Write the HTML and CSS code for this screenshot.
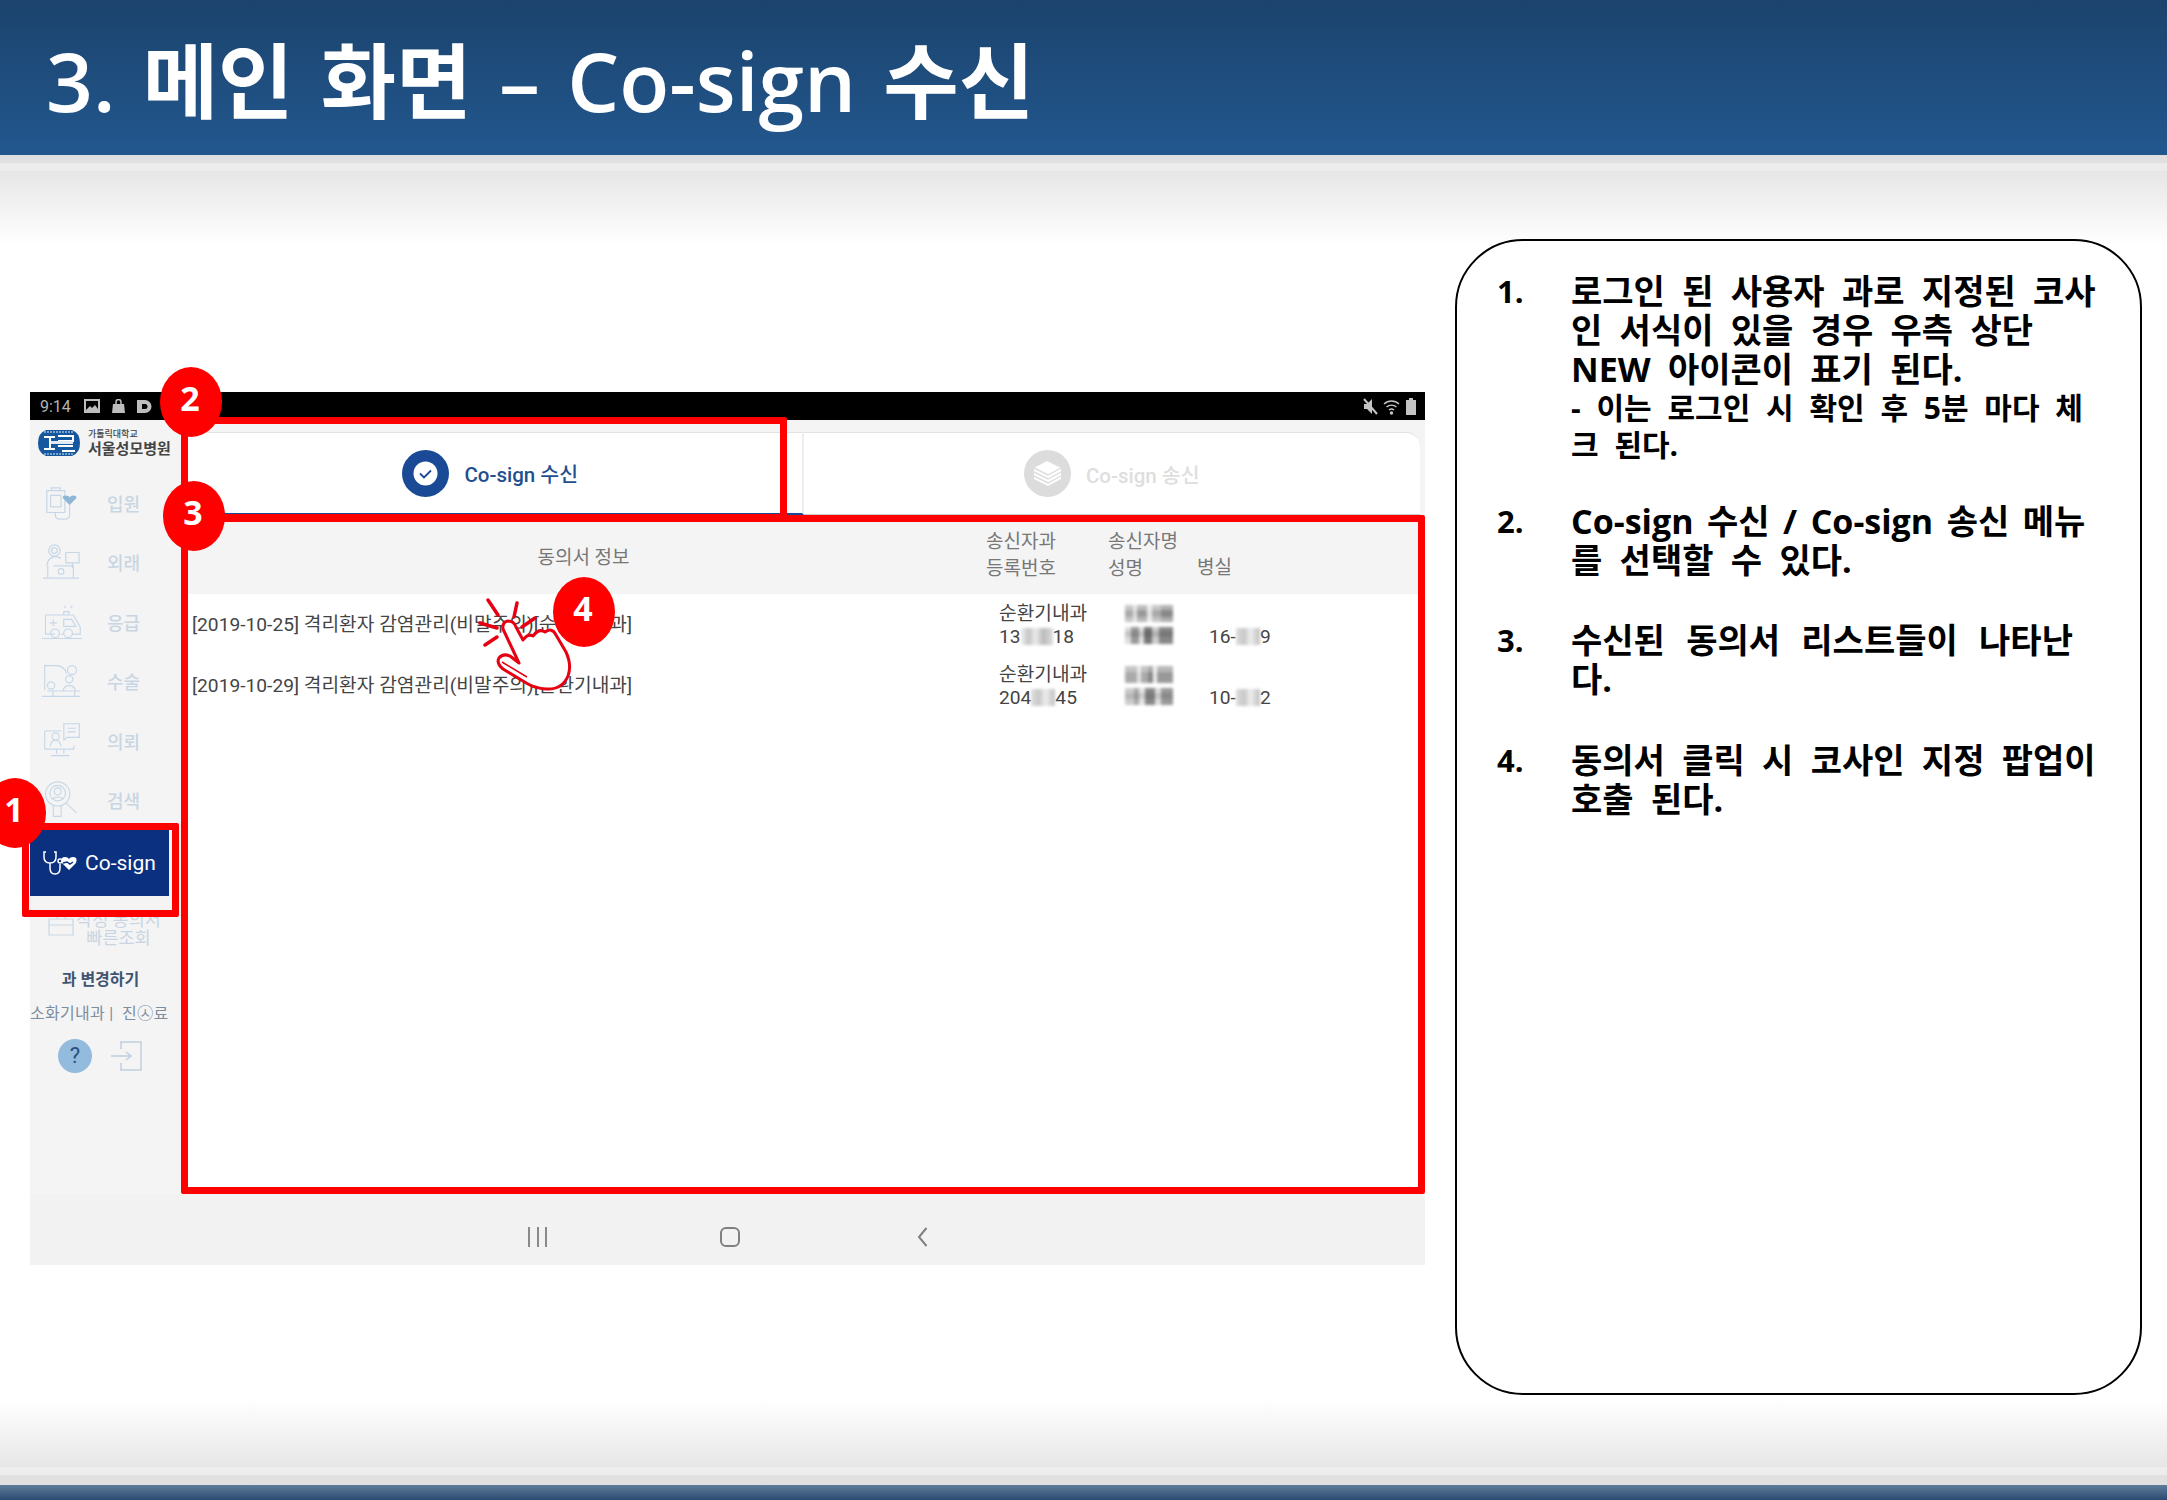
FILE: index.html
```html
<!DOCTYPE html>
<html lang="ko">
<head>
    <meta charset="UTF-8">
    <meta name="viewport" content="width=device-width, initial-scale=1.0">
    <title>3. 메인 화면 – Co-sign 수신</title>
    <link rel="stylesheet" href="styles.css">
</head>
<body>
    <header class="slide-header">
        <h1 class="slide-title">3. 메인 화면 – Co-sign 수신</h1>
    </header>

    <main class="slide-body">
        <div class="phone">
            <div class="status-bar">
                <div class="status-left">
                    <span class="status-time">9:14</span>
                    <svg class="status-icon" width="16" height="14" viewBox="0 0 16 14"><path fill="#bdbdbd" d="M0 0h16v14H0z"/><path fill="#000" d="M2 2h12v8l-3-4-3 3-2-2-4 4z"/></svg>
                    <svg class="status-icon" width="13" height="14" viewBox="0 0 13 14"><path fill="#bdbdbd" d="M1 5h11l1 9H0z"/><path fill="none" stroke="#bdbdbd" stroke-width="1.5" d="M4 5V3a2.500 2.500 0 0 1 5 0v2"/></svg>
                    <svg class="status-icon" width="15" height="13" viewBox="0 0 15 13"><path fill="#bdbdbd" fill-rule="evenodd" d="M0 0h8a6.500 6.500 0 0 1 0 13H0zM5 4v5h3a2.500 2.500 0 0 0 0-5z"/></svg>
                </div>
                <div class="status-right">
                    <svg width="15" height="17" viewBox="0 0 15 17"><path fill="#c4c4c4" d="M1 6h3l5-5v15L4 11H1z"/><path stroke="#c4c4c4" stroke-width="2" d="M1 1l13 15"/></svg>
                    <svg width="18" height="17" viewBox="0 0 18 17" fill="none" stroke="#c4c4c4" stroke-width="1.400"><path d="M1 6a11 11 0 0 1 15 0M3.500 9a7.500 7.500 0 0 1 10 0M6 12a4 4 0 0 1 5 0"/><circle cx="8.500" cy="15" r="1" fill="#c4c4c4"/></svg>
                    <svg width="10" height="17" viewBox="0 0 10 17"><path fill="#c4c4c4" d="M3 0h4v2h3v15H0V2h3z"/></svg>
                </div>
            </div>

            <div class="phone-main">
                <nav class="sidebar">
                    <div class="brand">
                        <svg width="44" height="28" viewBox="0 0 44 28">
                            <path fill="#15589f" d="M9 1h26q8 3 8 13t-8 13H9q-8-3-8-13T9 1z"/>
                            <path fill="none" stroke="#dfeaf5" stroke-width="1" stroke-dasharray="2 1" d="M7 3h30M7 25h30"/>
                            <path fill="none" stroke="#fff" stroke-width="2" d="M7 8h11M13 8v13M7 20h11M21 7h15v5H21M21 17h15M25 22h13"/>
                            <path fill="#dfeaf5" d="M14 12h22v3H14z"/>
                        </svg>
                        <div class="brand-text">
                            <span class="brand-small">가톨릭대학교</span>
                            <span class="brand-name">서울성모병원</span>
                        </div>
                    </div>

                    <a class="menu-item">
                        <svg class="menu-icon" viewBox="0 0 40 40">
                            <path d="M4 7h19v23H4zM9 4h9v3H9zM8 12h11v12H8zM13 30v3q0 4 5 4h5q5 0 5-4V20"/>
                            <path class="icon-fill" d="M28 22l-7-7q-1-3 3-3 3 0 4 2 1-2 4-2 4 0 3 3z"/>
                        </svg>
                        <span class="menu-label">입원</span>
                    </a>
                    <a class="menu-item">
                        <svg class="menu-icon" viewBox="0 0 40 40">
                            <circle cx="12" cy="8" r="6"/><circle cx="12" cy="8" r="3"/>
                            <path d="M4 24q1-9 9-10l6 2M5 24v12M24 10h14v11H24zM31 21v5M11 24h21v12M0 37h38"/>
                            <circle cx="19" cy="30" r="3"/>
                        </svg>
                        <span class="menu-label">외래</span>
                    </a>
                    <a class="menu-item">
                        <svg class="menu-icon" viewBox="0 0 46 40">
                            <path d="M4 12h20l12 0 8 14v8H35M15 34H4V12M25 34h-3M25 17h9l5 8H25zM9 21h8M13 17v8M25 12V8h6v4M27 4l-1-3M33 4l2-3M0 39h46"/>
                            <circle cx="15" cy="33" r="5"/><circle cx="30" cy="33" r="5"/>
                        </svg>
                        <span class="menu-label">응급</span>
                    </a>
                    <a class="menu-item">
                        <svg class="menu-icon" viewBox="0 0 44 40">
                            <path d="M3 2v28M3 3h12q10 0 12 9M0 37h42M6 31h36M12 31v6M36 31v6M23 31q1-6 7-6t7 6"/>
                            <circle cx="10" cy="25" r="4"/><circle cx="30" cy="18" r="4"/><circle cx="33" cy="8" r="5"/>
                        </svg>
                        <span class="menu-label">수술</span>
                    </a>
                    <a class="menu-item">
                        <svg class="menu-icon" viewBox="0 0 44 40">
                            <path d="M3 9h18v0M3 9v20h32v-4M16 29v5M24 29v5M10 36h20M24 1h17v15H28l-4 3zM28 6h9M28 10h9M9 26q1-7 6-7t6 7"/>
                            <circle cx="15" cy="15" r="4"/>
                        </svg>
                        <span class="menu-label">의뢰</span>
                    </a>
                    <a class="menu-item">
                        <svg class="menu-icon" viewBox="0 0 40 44">
                            <circle cx="15" cy="15" r="14"/><circle cx="15" cy="14" r="9"/><circle cx="15" cy="12" r="4"/>
                            <path d="M25 26l12 11M10 28v13h9V28M8 21q7-5 14 0"/>
                        </svg>
                        <span class="menu-label">검색</span>
                    </a>

                    <a class="menu-active">
                        <svg width="34" height="26" viewBox="0 0 34 26" fill="none" stroke="#fff" stroke-width="1.500">
                            <path d="M3 2H1v5q0 6 6 6t6-6V2h-2M7 13v5q0 6 5 6t5-6v-4"/>
                            <circle cx="17" cy="11" r="2"/>
                            <path fill="#fff" stroke="none" d="M26 20l-7-7q-2-6 3-6 3 0 4 2 1-2 4-2 5 0 3 6z"/>
                            <path stroke="#0b3080" d="M20 13l4-1 3 2 3-2"/>
                        </svg>
                        <span>Co-sign</span>
                    </a>

                    <div class="quick-view">
                        <svg class="quick-icon" width="26" height="22" viewBox="0 0 26 22" fill="none" stroke="#c9d7e3" stroke-width="1.200"><path d="M1 5h24v16H1zM1 11h24M9 5V1h8v4"/></svg>
                        <span class="quick-label">작성 동의서<br>빠른조회</span>
                    </div>
                    <div class="dept-change">과 변경하기</div>
                    <div class="dept-name">소화기내과&nbsp;|&nbsp; 진㉦료</div>
                    <div class="side-actions">
                        <span class="help-btn">?</span>
                        <svg width="32" height="30" viewBox="0 0 32 30" fill="none" stroke="#bfd0de" stroke-width="1.500"><path d="M10 8V1h20v28H10v-7M0 15h20M15 11l5 4-5 4"/></svg>
                    </div>
                </nav>

                <section class="content">
                    <div class="tabs">
                        <div class="tab tab-on">
                            <svg width="47" height="47" viewBox="0 0 47 47">
                                <circle cx="23.500" cy="23.500" r="23.500" fill="#1a4a96"/>
                                <circle cx="23.500" cy="23.500" r="12" fill="#fff"/>
                                <path fill="none" stroke="#1a4a96" stroke-width="1.800" d="M18 23.500l4 4 7-7"/>
                            </svg>
                            <span>Co-sign 수신</span>
                        </div>
                        <div class="tab tab-off">
                            <svg width="47" height="47" viewBox="0 0 47 47">
                                <circle cx="23.500" cy="23.500" r="23.500" fill="#dcdcdc"/>
                                <path fill="#fff" d="M23 11l14 7v11l-13 7-14-7V18z"/>
                                <path fill="none" stroke="#dcdcdc" stroke-width="1.400" d="M10 18l14 7 13-7M10 22l14 7 13-7M10 26l14 7 13-7"/>
                            </svg>
                            <span>Co-sign 송신</span>
                        </div>
                    </div>

                    <div class="table-head">
                        <div class="head-info">동의서 정보</div>
                        <div>송신자과<br>등록번호</div>
                        <div>송신자명<br>성명</div>
                        <div class="cell-low">병실</div>
                    </div>

                    <div class="table-row">
                        <div class="row-title">[2019-10-25] 격리환자 감염관리(비말주의)[순환기내과]</div>
                        <div>순환기내과<br>13<span class="blur-num blur-3"></span>18</div>
                        <div class="blur-name">
                            <span class="blur-block b-c"></span>
                            <span class="blur-block b-d"></span>
                        </div>
                        <div class="cell-low">16-<span class="blur-num blur-2"></span>9</div>
                    </div>
                    <div class="table-row">
                        <div class="row-title">[2019-10-29] 격리환자 감염관리(비말주의)[순환기내과]</div>
                        <div>순환기내과<br>204<span class="blur-num blur-2"></span>45</div>
                        <div class="blur-name">
                            <span class="blur-block b-e"></span>
                            <span class="blur-block b-f"></span>
                        </div>
                        <div class="cell-low">10-<span class="blur-num blur-2"></span>2</div>
                    </div>
                </section>
            </div>

            <div class="nav-bar">
                <span class="nav-recent"><i></i><i></i><i></i></span>
                <span class="nav-home"></span>
                <svg class="nav-back" width="11" height="20" viewBox="0 0 11 20"><path fill="none" stroke="#808080" stroke-width="2" d="M9.500 1L2 10l7.500 9"/></svg>
            </div>

            <!-- red marks drawn over the screenshot -->
            <div class="mark mark-menu"></div>
            <div class="mark mark-tab"></div>
            <div class="mark mark-list"></div>
            <svg class="hand" width="110" height="100" viewBox="470 595 110 100">
                <g fill="none" stroke="#e60012" stroke-width="3.500" stroke-linecap="round">
                    <path d="M488 600l10 15M517 603l-3 14M535 618l-13 9M480 623l17 5M485 645l12-8"/>
                </g>
                <path fill="#fff" stroke="#e60012" stroke-width="3" stroke-linejoin="round" d="M503 629q-1-7 5-8 6 0 8 6l7 13q5-7 10-4 6-8 12-4 7-5 11 3l10 17q6 13 2 24-6 14-22 13-11-1-18-5l-25-15q-7-6-4-11 4-5 11-2l9 7z"/>
                <path fill="none" stroke="#e60012" stroke-width="1.500" d="M502 662l25 15"/>
            </svg>
            <span class="badge badge-1">1</span>
            <span class="badge badge-2">2</span>
            <span class="badge badge-3">3</span>
            <span class="badge badge-4">4</span>
        </div>

        <aside class="notes">
            <ol class="note-list">
                <li class="note note-first">
                    <span class="note-num">1.</span>
                    <div>
                        <span class="note-line">로그인 된 사용자 과로 지정된 코사</span>
                        <span class="note-line">인 서식이 있을 경우 우측 상단</span>
                        <span class="note-line">NEW 아이콘이 표기 된다.</span>
                        <span class="note-line note-sub">- 이는 로그인 시 확인 후 5분 마다 체</span>
                        <span class="note-line note-sub">크 된다.</span>
                    </div>
                </li>
                <li class="note">
                    <span class="note-num">2.</span>
                    <div>
                        <span class="note-line note-tight">Co-sign 수신 / Co-sign 송신 메뉴</span>
                        <span class="note-line">를 선택할 수 있다.</span>
                    </div>
                </li>
                <li class="note">
                    <span class="note-num">3.</span>
                    <div>
                        <span class="note-line note-wide">수신된 동의서 리스트들이 나타난</span>
                        <span class="note-line">다.</span>
                    </div>
                </li>
                <li class="note">
                    <span class="note-num">4.</span>
                    <div>
                        <span class="note-line">동의서 클릭 시 코사인 지정 팝업이</span>
                        <span class="note-line">호출 된다.</span>
                    </div>
                </li>
            </ol>
        </aside>
    </main>

    <footer class="slide-footer"></footer>
</body>
</html>
```

FILE: styles.css
```css
* {
    box-sizing: border-box;
}
body {
    margin: 0;
    width: 2167px;
    height: 1500px;
    overflow: hidden;
    display: flex;
    flex-direction: column;
    background-color: #fff;
    font-family: "Open Sans", "Noto Sans CJK KR", sans-serif;
}

/* slide frame */
.slide-header {
    height: 155px;
    flex: none;
    display: flex;
    align-items: center;
    padding: 4px 0 0 46px;
    background: linear-gradient(#1b436d, #22578e);
}
.slide-title {
    margin: 0;
    color: #fff;
    font-size: 82px;
    font-weight: 600;
    line-height: 1;
    word-spacing: 6px;
}
.slide-body {
    height: 1330px;
    flex: none;
    display: flex;
    align-items: flex-start;
    padding-left: 30px;
    background:
        linear-gradient(#e0e0e0 8px, #ececec 8px 16px, #e6e6e6 16px, #fff 90px) top / 100% 90px no-repeat,
        linear-gradient(#fff, #e6e6e6 67px, #ededed 67px 75px, #e0e0e0 75px) bottom / 100% 85px no-repeat,
        #fff;
}
.slide-footer {
    height: 15px;
    flex: none;
    background: linear-gradient(#5f7c9b, #2b4a70);
}

/* phone screenshot */
.phone {
    position: relative;
    width: 1395px;
    height: 873px;
    margin-top: 237px;
    flex: none;
    display: flex;
    flex-direction: column;
    background-color: #f4f4f5;
    font-family: Roboto, "Noto Sans CJK KR", sans-serif;
}
.status-bar {
    height: 28px;
    flex: none;
    display: flex;
    justify-content: space-between;
    align-items: center;
    padding: 0 9px 0 10px;
    background-color: #000;
}
.status-left, .status-right {
    display: flex;
    align-items: center;
}
.status-right {
    gap: 5px;
}
.status-time {
    width: 44px;
    color: #b4b4b4;
    font-size: 16px;
}
.status-icon {
    margin-right: 12px;
}
.phone-main {
    flex: 1;
    display: flex;
    min-height: 0;
}

/* left menu */
.sidebar {
    width: 157px;
    flex: none;
    display: flex;
    flex-direction: column;
}
.brand {
    height: 53px;
    flex: none;
    display: flex;
    align-items: flex-start;
    gap: 7px;
    padding: 9px 0 0 7px;
}
.brand-text {
    display: flex;
    flex-direction: column;
}
.brand-small {
    color: #444;
    font-size: 9px;
    font-weight: 500;
    line-height: 11px;
}
.brand-name {
    color: #444;
    font-size: 15px;
    font-weight: 700;
    line-height: 18px;
    white-space: nowrap;
}
.menu-item {
    height: 59.500px;
    flex: none;
    display: flex;
    align-items: center;
    padding-left: 12px;
}
.menu-icon {
    width: 40px;
    height: 38px;
    flex: none;
    fill: none;
    stroke: #c6d8e7;
    stroke-width: 1.300;
}
.icon-fill {
    fill: #8db6d6;
    stroke: none;
}
.menu-label {
    margin-left: 25px;
    color: #c9d6e2;
    font-size: 18px;
    font-weight: 500;
    white-space: nowrap;
}
.menu-active {
    width: 139px;
    height: 66px;
    flex: none;
    display: flex;
    align-items: center;
    gap: 8px;
    padding-left: 13px;
    background-color: #0b3080;
    color: #fff;
    font-size: 21px;
}
.quick-view {
    display: flex;
    align-items: flex-start;
    justify-content: center;
    gap: 2px;
    margin-top: 15px;
    padding-right: 8px;
    color: #c9d6e2;
    font-size: 17.500px;
    line-height: 18px;
    text-align: center;
}
.quick-icon {
    flex: none;
    margin-top: 3px;
}
.quick-label {
    white-space: nowrap;
}
.dept-change {
    margin-top: 19px;
    padding-right: 16px;
    color: #3f5570;
    font-size: 16px;
    font-weight: 700;
    text-align: center;
}
.dept-name {
    margin-top: 10px;
    color: #7c8ea0;
    font-size: 16px;
    letter-spacing: .3px;
    white-space: nowrap;
}
.side-actions {
    display: flex;
    align-items: center;
    gap: 19px;
    margin-top: 15px;
    padding-left: 28px;
}
.help-btn {
    width: 34px;
    height: 34px;
    border-radius: 50%;
    background-color: #93bbde;
    color: #2b4f7d;
    font-size: 22px;
    line-height: 34px;
    text-align: center;
}

/* consent list */
.content {
    flex: 1;
    display: flex;
    flex-direction: column;
    background-color: #fff;
}
.tabs {
    height: 95px;
    flex: none;
    display: flex;
    padding-top: 12px;
    padding-right: 5px;
    background-color: #f4f4f5;
}
.tab {
    flex: 0 0 50%;
    display: flex;
    align-items: center;
    justify-content: center;
    gap: 15px;
    background-color: #fff;
    border-top: 1px solid #e2e2e2;
    font-size: 20.500px;
    font-weight: 500;
}
.tab-on {
    color: #1f4f8f;
    border-right: 2px solid #eee;
    border-bottom: 2px solid #1a4a96;
    padding-right: 8px;
}
.tab-off {
    color: #dedede;
    border-bottom: 1px solid #ccc;
    border-top-right-radius: 14px;
}
.table-head {
    height: 79px;
    flex: none;
    display: grid;
    grid-template-columns: 799px 122px 89px 1fr;
    align-items: center;
    background-color: #f4f4f5;
    color: #777;
    font-size: 19px;
    line-height: 27px;
}
.head-info {
    padding: 5px 6px 0 0;
    text-align: center;
}
.cell-low {
    align-self: end;
}
.table-head .cell-low {
    padding-bottom: 13px;
}
.table-row {
    height: 61px;
    flex: none;
    display: grid;
    grid-template-columns: 812px 126px 84px 1fr;
    align-items: center;
    color: #444;
    font-size: 19.200px;
    line-height: 23px;
}
.table-row .cell-low {
    padding-bottom: 7px;
}
.row-title {
    padding-left: 5px;
    white-space: nowrap;
}
/* masked digits and names */
.blur-num {
    display: inline-block;
    height: 17px;
    vertical-align: -2px;
    filter: blur(1.500px);
}
.blur-3 {
    width: 32px;
    background: linear-gradient(90deg, #eee, #c4c4c4 25%, #ececec 45%, #bbb 70%, #ddd);
}
.blur-2 {
    width: 24px;
    background: linear-gradient(90deg, #ddd, #c8c8c8 35%, #eee 60%, #c0c0c0);
}
.blur-name {
    display: flex;
    flex-direction: column;
    gap: 5px;
}
.blur-block {
    width: 48px;
    height: 17px;
    filter: blur(1.500px);
}
.b-c {
    background:
        linear-gradient(rgba(255, 255, 255, .35) 0 5px, transparent 5px 12px, rgba(255, 255, 255, .3) 12px),
        linear-gradient(90deg, #aaa 0 8px, #ddd 8px 12px, #999 12px 22px, #e4e4e4 22px 27px, #aaa 27px 36px, #888 36px);
}
.b-d {
    background:
        linear-gradient(transparent 0 4px, rgba(0, 0, 0, .12) 4px 10px, transparent 10px),
        linear-gradient(90deg, #ddd 0 6px, #999 6px 14px, #e2e2e2 14px 19px, #777 19px 27px, #ccc 27px 34px, #888 34px);
}
.b-e {
    background:
        linear-gradient(rgba(255, 255, 255, .3) 0 6px, transparent 6px),
        linear-gradient(90deg, #aaa 0 12px, #e2e2e2 12px 16px, #aaa 16px 23px, #888 23px 28px, #eee 28px 32px, #999 32px);
}
.b-f {
    background:
        linear-gradient(transparent 0 5px, rgba(0, 0, 0, .1) 5px 11px, transparent 11px),
        linear-gradient(90deg, #ccc 0 9px, #aaa 9px 14px, #e4e4e4 14px 20px, #888 20px 30px, #ddd 30px 36px, #999 36px);
}

/* soft keys */
.nav-bar {
    height: 71px;
    flex: none;
    display: flex;
    align-items: center;
    padding: 15px 0 0 498px;
    background-color: #f2f2f2;
}
.nav-recent {
    width: 19px;
    height: 20px;
    display: flex;
    justify-content: space-between;
}
.nav-recent i {
    width: 2px;
    background-color: #8a8a8a;
}
.nav-home {
    width: 20px;
    height: 20px;
    margin-left: 173px;
    border: 2.500px solid #808080;
    border-radius: 6px;
}
.nav-back {
    margin-left: 177px;
}

/* overlays */
.mark {
    position: absolute;
    border: 7px solid #f00;
    border-radius: 2px;
}
.mark-menu {
    left: -8px;
    top: 431px;
    width: 157px;
    height: 94px;
}
.mark-tab {
    left: 151px;
    top: 25px;
    width: 606px;
    height: 104px;
}
.mark-list {
    left: 151px;
    top: 123px;
    width: 1244px;
    height: 679px;
}
.hand {
    position: absolute;
    left: 440px;
    top: 203px;
}
.badge {
    position: absolute;
    width: 62px;
    height: 70px;
    padding-right: 2px;
    border-radius: 50%;
    background-color: #f00;
    color: #fff;
    font-family: "Open Sans", sans-serif;
    font-size: 34px;
    font-weight: 700;
    line-height: 63px;
    text-align: center;
}
.badge-1 {
    left: -46px;
    top: 386px;
}
.badge-2 {
    left: 130px;
    top: -25px;
}
.badge-3 {
    left: 133px;
    top: 89px;
}
.badge-4 {
    left: 523px;
    top: 185px;
}

/* explanation box */
.notes {
    width: 687px;
    height: 1156px;
    margin: 84px 0 0 30px;
    flex: none;
    padding: 31px 20px 0 40px;
    border: 2px solid #000;
    border-radius: 68px;
    background-color: #fff;
    color: #000;
}
.note-list {
    display: flex;
    flex-direction: column;
    gap: 41.500px;
    margin: 0;
    padding: 0;
    list-style: none;
}
.note {
    display: grid;
    grid-template-columns: 74px 1fr;
}
.note-first {
    margin-bottom: -3px;
}
.note-num {
    font-size: 31px;
    font-weight: 700;
    line-height: 39px;
}
.note-line {
    display: block;
    font-size: 34px;
    font-weight: 700;
    line-height: 39px;
    word-spacing: 8.500px;
    white-space: nowrap;
}
.note-sub {
    font-size: 30px;
    line-height: 37px;
    word-spacing: 8px;
}
.note-tight {
    word-spacing: 4.700px;
}
.note-wide {
    word-spacing: 12.500px;
}
```
